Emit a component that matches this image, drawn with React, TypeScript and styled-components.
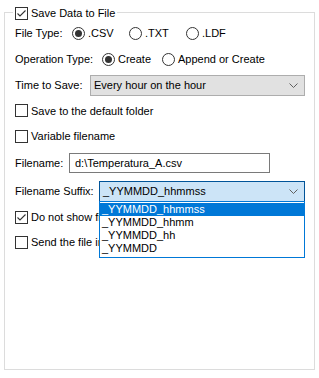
import React from "react";
import styled, { createGlobalStyle } from "styled-components";

const GlobalStyle = createGlobalStyle`
  html, body {
    margin: 0;
    padding: 0;
    background: #ffffff;
  }
  body {
    font-family: "Liberation Sans", Arial, sans-serif;
    font-size: 11px;
    color: #000000;
  }
`;

const Page = styled.div`
  width: 319px;
  height: 378px;
  padding-top: 12px;
  box-sizing: border-box;
`;

const Group = styled.div`
  margin-left: 4px;
  width: 311px;
  height: 358px;
  box-sizing: border-box;
  border: 1px solid #dcdcdc;
  display: flex;
  flex-direction: column;
`;

const Legend = styled.div`
  align-self: flex-start;
  margin: -7px 0 0 8px;
  padding: 0 2px;
  height: 14px;
  background: #ffffff;
  display: flex;
  align-items: center;
  gap: 3px;
`;

const Body = styled.div`
  display: flex;
  flex-direction: column;
  padding-left: 10px;
`;

const Row = styled.div<{ $h: number }>`
  height: ${(p) => p.$h}px;
  display: flex;
  align-items: center;
  position: relative;
`;

const Label = styled.span<{ $w: number }>`
  width: ${(p) => p.$w}px;
  flex-shrink: 0;
  white-space: nowrap;
`;

const Option = styled.label<{ $w?: number; $clip?: boolean }>`
  display: flex;
  align-items: center;
  gap: 3px;
  white-space: nowrap;
  width: ${(p) => (p.$w ? `${p.$w}px` : "auto")};
  overflow: ${(p) => (p.$clip ? "hidden" : "visible")};
  flex-shrink: 0;
`;

const Box = styled.span`
  width: 13px;
  height: 13px;
  box-sizing: border-box;
  border: 1px solid #333333;
  background: #ffffff;
  display: flex;
  align-items: center;
  justify-content: center;
  flex-shrink: 0;
`;

const Circle = styled.span`
  width: 13px;
  height: 13px;
  box-sizing: border-box;
  border: 1px solid #333333;
  border-radius: 50%;
  background: #ffffff;
  display: flex;
  align-items: center;
  justify-content: center;
  flex-shrink: 0;
`;

const Dot = styled.span`
  width: 7px;
  height: 7px;
  border-radius: 50%;
  background: #333333;
`;

const Select = styled.div<{ $w: number; $focus?: boolean }>`
  width: ${(p) => p.$w}px;
  height: 21px;
  box-sizing: border-box;
  border: 1px solid ${(p) => (p.$focus ? "#005499" : "#adadad")};
  background: ${(p) => (p.$focus ? "#cce4f7" : "#e1e1e1")};
  display: flex;
  align-items: center;
  justify-content: space-between;
  padding: 0 6px 0 3px;
  flex-shrink: 0;
`;

const Input = styled.div`
  width: 201px;
  height: 20px;
  box-sizing: border-box;
  border: 1px solid #7a7a7a;
  background: #ffffff;
  display: flex;
  align-items: center;
  padding-left: 5px;
`;

const Combo = styled.div`
  position: relative;
`;

const List = styled.div`
  position: absolute;
  top: 20px;
  left: 0;
  width: 206px;
  box-sizing: border-box;
  border: 1px solid #0078d7;
  background: #ffffff;
  padding: 1px 0 2px;
  z-index: 2;
`;

const Item = styled.div<{ $active?: boolean }>`
  height: 13px;
  line-height: 13px;
  padding-left: 2px;
  background: ${(p) => (p.$active ? "#0078d7" : "transparent")};
  color: ${(p) => (p.$active ? "#ffffff" : "#000000")};
`;

const Check = ({ on }: { on?: boolean }) => (
  <Box>
    {on && (
      <svg width="11" height="11" viewBox="0 0 11 11">
        <polyline points="1.5,5.5 4,8 9.5,2.5" fill="none" stroke="#333333" strokeWidth="1.1" />
      </svg>
    )}
  </Box>
);

const Radio = ({ on }: { on?: boolean }) => <Circle>{on && <Dot />}</Circle>;

const Chevron = () => (
  <svg width="9" height="5" viewBox="0 0 9 5">
    <polyline points="0.5,0.5 4.5,4.5 8.5,0.5" fill="none" stroke="#606060" strokeWidth="1" />
  </svg>
);

const suffixes = ["_YYMMDD_hhmmss", "_YYMMDD_hhmm", "_YYMMDD_hh", "_YYMMDD"];

export default function App() {
  return (
    <Page>
      <GlobalStyle />
      <Group>
        <Legend>
          <Check on />
          <span>Save Data to File</span>
        </Legend>
        <Body>
          <Row $h={26}>
            <Label $w={57}>File Type:</Label>
            <Option $w={57}>
              <Radio on />
              .CSV
            </Option>
            <Option $w={57}>
              <Radio />
              .TXT
            </Option>
            <Option>
              <Radio />
              .LDF
            </Option>
          </Row>
          <Row $h={26}>
            <Label $w={87}>Operation Type:</Label>
            <Option $w={60}>
              <Radio on />
              Create
            </Option>
            <Option>
              <Radio />
              Append or Create
            </Option>
          </Row>
          <Row $h={26}>
            <Label $w={75}>Time to Save:</Label>
            <Select $w={215}>
              <span>Every hour on the hour</span>
              <Chevron />
            </Select>
          </Row>
          <Row $h={25}>
            <Option>
              <Check />
              Save to the default folder
            </Option>
          </Row>
          <Row $h={26}>
            <Option>
              <Check />
              Variable filename
            </Option>
          </Row>
          <Row $h={28}>
            <Label $w={54}>Filename:</Label>
            <Input>d:\Temperatura_A.csv</Input>
          </Row>
          <Row $h={28}>
            <Label $w={84}>Filename Suffix:</Label>
            <Combo>
              <Select $w={206} $focus>
                <span>_YYMMDD_hhmmss</span>
                <Chevron />
              </Select>
              <List>
                {suffixes.map((s, i) => (
                  <Item key={s} $active={i === 0}>
                    {s}
                  </Item>
                ))}
              </List>
            </Combo>
          </Row>
          <Row $h={24}>
            <Option $w={84} $clip>
              <Check on />
              Do not show file save dialog
            </Option>
          </Row>
          <Row $h={26}>
            <Option $w={84} $clip>
              <Check />
              Send the file in an e-mail
            </Option>
          </Row>
        </Body>
      </Group>
    </Page>
  );
}
